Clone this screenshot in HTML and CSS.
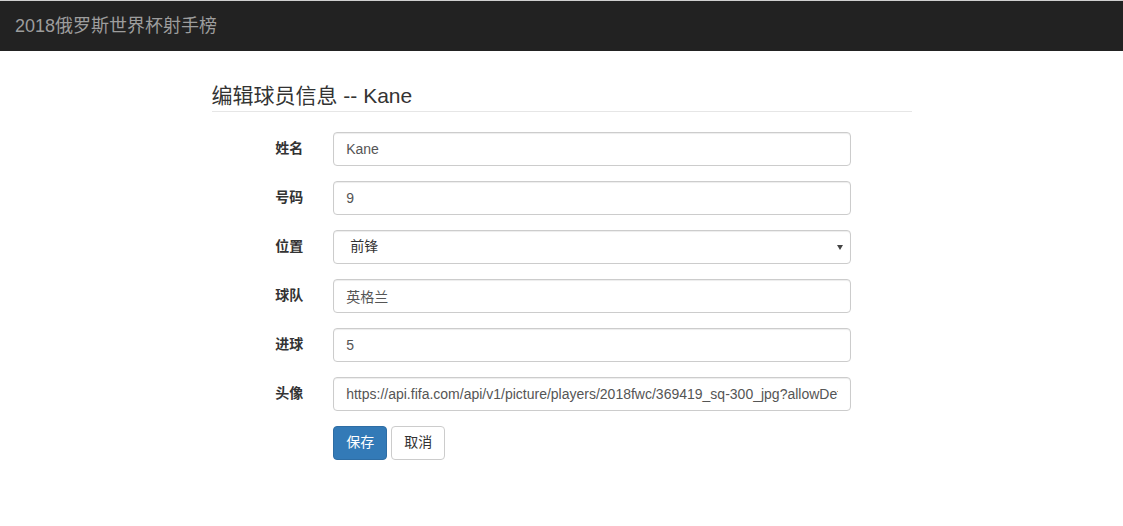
FILE: index.html
```html
<!DOCTYPE html>
<html lang="zh">
<head>
<meta charset="utf-8">
<title>2018俄罗斯世界杯射手榜</title>
<link rel="stylesheet" href="styles.css">
</head>
<body>
<nav class="navbar">
  <a class="brand" href="#">2018俄罗斯世界杯射手榜</a>
</nav>
<main class="container">
  <h3 class="page-header">编辑球员信息 -- Kane</h3>
  <form class="form">
    <div class="form-group">
      <label class="label">姓名</label>
      <div class="field"><input class="control" type="text" value="Kane"></div>
    </div>
    <div class="form-group">
      <label class="label">号码</label>
      <div class="field"><input class="control" type="text" value="9"></div>
    </div>
    <div class="form-group">
      <label class="label">位置</label>
      <div class="field select-wrap">
        <select class="control select">
          <option>前锋</option>
          <option>中场</option>
          <option>后卫</option>
          <option>门将</option>
        </select>
      </div>
    </div>
    <div class="form-group">
      <label class="label">球队</label>
      <div class="field"><input class="control" type="text" value="英格兰"></div>
    </div>
    <div class="form-group">
      <label class="label">进球</label>
      <div class="field"><input class="control" type="text" value="5"></div>
    </div>
    <div class="form-group">
      <label class="label">头像</label>
      <div class="field"><input class="control" type="text" value="https://api.fifa.com/api/v1/picture/players/2018fwc/369419_sq-300_jpg?allowDefaultPicture=true"></div>
    </div>
    <div class="form-group">
      <span class="label"></span>
      <div class="field buttons">
        <button type="button" class="btn btn-primary">保存</button>
        <button type="button" class="btn btn-default">取消</button>
      </div>
    </div>
  </form>
</main>
</body>
</html>
```

FILE: styles.css
```css
* { box-sizing: border-box; }
body {
  margin: 0;
  font-family: "Liberation Sans", Arial, "Noto Sans CJK SC", sans-serif;
  font-size: 14px;
  line-height: 1.42857;
  color: #333;
  background: #fff;
}
.navbar {
  height: 51px;
  background: #222;
  border-top: 1px solid #cfcfcf;
  display: flex;
  align-items: center;
  padding: 0 15px;
}
.brand {
  color: #9d9d9d;
  font-size: 18px;
  line-height: 20px;
  text-decoration: none;
  margin-top: -1px;
}
.container {
  width: 700px;
  margin: 0 auto;
}
.page-header {
  font-size: 21px;
  font-weight: 400;
  line-height: 1.1;
  margin: 33px 0 20px;
  padding-bottom: 4px;
  border-bottom: 1px solid #e6e6e6;
  color: #333;
}
.form {
  display: flex;
  flex-direction: column;
  gap: 15px;
  margin-left: -15px;
  margin-right: -15px;
}
.form-group {
  display: flex;
  align-items: center;
}
.label {
  width: 121.67px;
  padding: 0 15px;
  text-align: right;
  font-weight: 700;
}
.field {
  width: 547.5px;
  padding: 0 15px;
}
.control {
  display: block;
  width: 100%;
  height: 34px;
  padding: 6px 12px;
  font-family: inherit;
  font-size: 14px;
  line-height: 1.42857;
  color: #555;
  background: #fff;
  border: 1px solid #ccc;
  border-radius: 4px;
  box-shadow: inset 0 1px 1px rgba(0,0,0,.075);
  outline: none;
}
.select-wrap {
  position: relative;
}
.select {
  -webkit-appearance: none;
  appearance: none;
  padding-left: 16px;
  color: #333;
}
.select-wrap::after {
  content: "";
  position: absolute;
  right: 23px;
  top: 15px;
  width: 0;
  height: 0;
  border-left: 3px solid transparent;
  border-right: 3px solid transparent;
  border-top: 5px solid #444;
  pointer-events: none;
}
.buttons {
  display: flex;
  gap: 4px;
}
.btn {
  height: 34px;
  padding: 6px 12px;
  font-family: inherit;
  font-size: 14px;
  line-height: 1.42857;
  border: 1px solid transparent;
  border-radius: 4px;
  cursor: pointer;
}
.btn-primary {
  color: #fff;
  background: #337ab7;
  border-color: #2e6da4;
}
.btn-default {
  color: #333;
  background: #fff;
  border-color: #ccc;
}
```
